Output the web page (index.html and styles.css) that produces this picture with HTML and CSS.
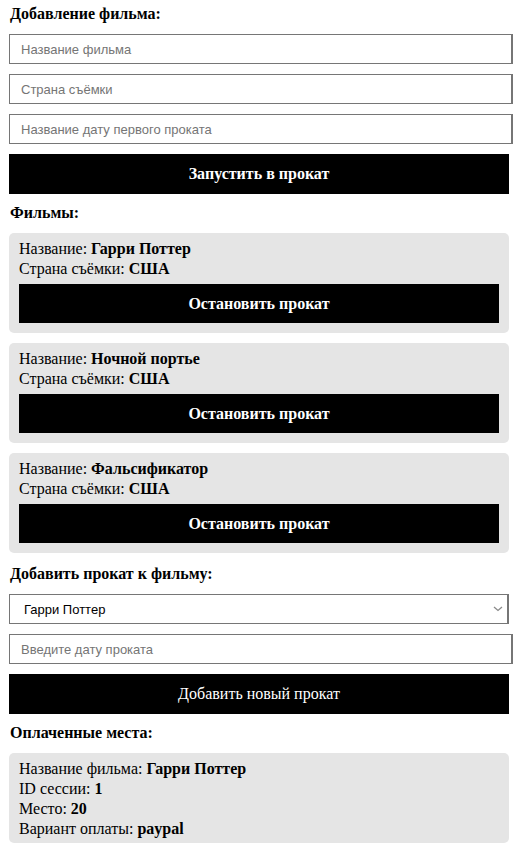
FILE: index.html
```html
<!DOCTYPE html>
<html lang="ru">
<head>
<meta charset="utf-8">
<title>Фильмы</title>
<link rel="stylesheet" href="styles.css">
</head>
<body>
<div class="page">
  <h3 class="title">Добавление фильма:</h3>
  <div class="form">
    <input class="field" type="text" placeholder="Название фильма">
    <input class="field" type="text" placeholder="Страна съёмки">
    <input class="field" type="text" placeholder="Название дату первого проката">
    <button class="btn btn-bold">Запустить в прокат</button>
  </div>

  <h3 class="title">Фильмы:</h3>
  <div class="list">
    <div class="card">
      <div class="line">Название: <b>Гарри Поттер</b></div>
      <div class="line">Страна съёмки: <b>США</b></div>
      <button class="btn btn-bold card-btn">Остановить прокат</button>
    </div>
    <div class="card">
      <div class="line">Название: <b>Ночной портье</b></div>
      <div class="line">Страна съёмки: <b>США</b></div>
      <button class="btn btn-bold card-btn">Остановить прокат</button>
    </div>
    <div class="card">
      <div class="line">Название: <b>Фальсификатор</b></div>
      <div class="line">Страна съёмки: <b>США</b></div>
      <button class="btn btn-bold card-btn">Остановить прокат</button>
    </div>
  </div>

  <h3 class="title">Добавить прокат к фильму:</h3>
  <div class="form">
    <div class="select-wrap">
      <select class="select">
        <option>Гарри Поттер</option>
        <option>Ночной портье</option>
        <option>Фальсификатор</option>
      </select>
      <svg class="chev" width="10" height="6" viewBox="0 0 10 6"><path d="M1 1 L5 4.5 L9 1" fill="none" stroke="#8a8a8a" stroke-width="1.3"/></svg>
    </div>
    <input class="field" type="text" placeholder="Введите дату проката">
    <button class="btn">Добавить новый прокат</button>
  </div>

  <h3 class="title">Оплаченные места:</h3>
  <div class="card paid">
    <div class="line">Название фильма: <b>Гарри Поттер</b></div>
    <div class="line">ID сессии: <b>1</b></div>
    <div class="line">Место: <b>20</b></div>
    <div class="line">Вариант оплаты: <b>paypal</b></div>
  </div>
</div>
</body>
</html>
```

FILE: styles.css
```css
html, body {
  margin: 0;
  padding: 0;
  background: #ffffff;
}

body {
  font-family: "Liberation Serif", "Times New Roman", serif;
  font-size: 16px;
  color: #000;
}

.page {
  width: 500px;
  padding: 4px 9px 0 9px;
}

.title {
  margin: 0 0 10px 1px;
  font-size: 16px;
  font-weight: bold;
  line-height: 20px;
}

.form {
  display: flex;
  flex-direction: column;
  gap: 10px;
  margin-bottom: 9px;
}

.field {
  display: block;
  box-sizing: border-box;
  width: calc(100% + 4px);
  height: 30px;
  margin: 0;
  padding: 0 0 0 11px;
  border: 1px solid #767676;
  border-right-width: 2px;
  border-radius: 0;
  font-family: "Liberation Sans", Arial, sans-serif;
  font-size: 13px;
  color: #000;
  background: #fff;
  outline: none;
}

.field::placeholder {
  color: #757575;
}

.select-wrap {
  position: relative;
  width: 100%;
  height: 30px;
}

.select {
  display: block;
  box-sizing: border-box;
  width: 100%;
  height: 30px;
  margin: 0;
  padding: 0 0 0 14px;
  border: 1px solid #767676;
  border-right-width: 2px;
  border-radius: 0;
  appearance: none;
  -webkit-appearance: none;
  background: #fff;
  font-family: "Liberation Sans", Arial, sans-serif;
  font-size: 13px;
  color: #000;
}

.chev {
  position: absolute;
  right: 6px;
  top: 12px;
  pointer-events: none;
}

.btn {
  display: block;
  box-sizing: border-box;
  width: 100%;
  height: 40px;
  margin: 0;
  padding: 0;
  border: none;
  border-radius: 0;
  background: #000;
  color: #fff;
  font-family: "Liberation Serif", "Times New Roman", serif;
  font-size: 16px;
  font-weight: normal;
  text-align: center;
  cursor: pointer;
}

.btn-bold {
  font-weight: bold;
}

.list {
  display: flex;
  flex-direction: column;
  gap: 10px;
  margin-bottom: 11px;
}

.card {
  background: #e5e5e5;
  border-radius: 5px;
  padding: 6px 10px 10px 10px;
}

.line {
  line-height: 20px;
}

.card-btn {
  height: 39px;
  margin-top: 5px;
}

.paid {
  padding: 6px 10px 4px 10px;
}
```
